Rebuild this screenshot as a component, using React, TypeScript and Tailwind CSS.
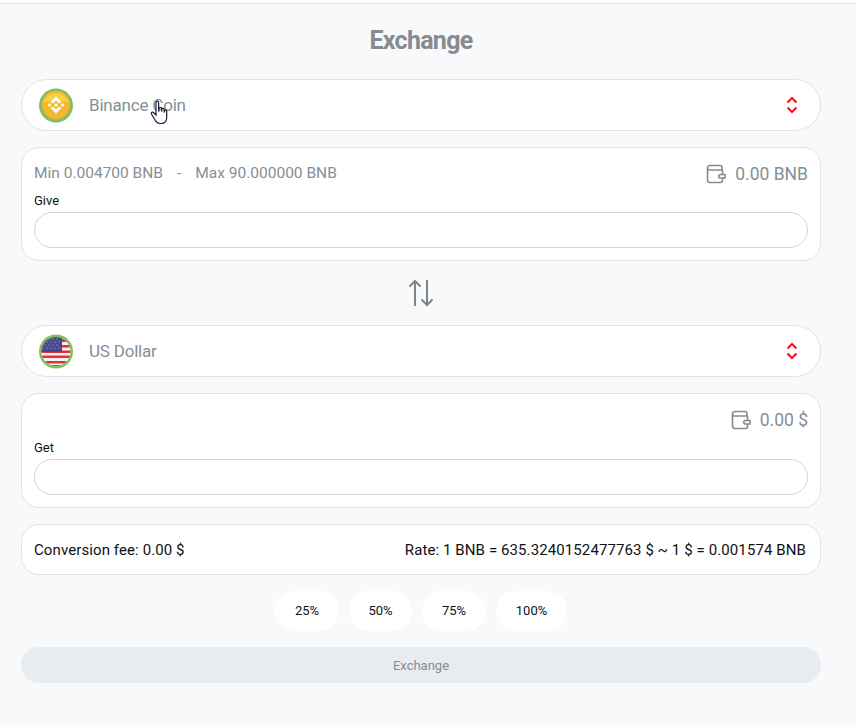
const FONT = "font-['Roboto',sans-serif]";

function BnbCoin() {
  return (
    <svg width="34" height="35" viewBox="0 0 34 35" className="shrink-0">
      <circle cx="17" cy="17.5" r="17" fill="#86bd62" />
      <circle cx="17" cy="17" r="14" fill="#f3b92d" />
      <path d="M4 15a13.5 13.5 0 0 1 26 0c-8-3-18-3-26 0z" fill="#f8cf47" />
      <path
        d="M17 8.5l5.2 5.2-2 2L17 12.5l-3.2 3.2-2-2zM8.5 17l2-2 2 2-2 2zM21.5 17l2-2 2 2-2 2zM17 14.900l2.100 2.100-2.100 2.100-2.100-2.100zM11.800 20.300l2-2 3.200 3.200 3.200-3.200 2 2-5.200 5.200z"
        fill="#fff"
      />
    </svg>
  );
}

function UsFlag() {
  return (
    <svg width="34" height="35" viewBox="0 0 34 35" className="shrink-0">
      <defs>
        <clipPath id="flag-clip">
          <circle cx="17" cy="17.500" r="14.500" />
        </clipPath>
      </defs>
      <circle cx="17" cy="17.500" r="17" fill="#7fc25a" />
      <g clipPath="url(#flag-clip)">
        <rect x="0" y="0" width="34" height="35" fill="#fbeeee" />
        <rect x="0" y="5" width="34" height="3" fill="#d9333f" />
        <rect x="0" y="11" width="34" height="2.500" fill="#d9333f" />
        <rect x="0" y="16.500" width="34" height="2.500" fill="#d9333f" />
        <rect x="0" y="21.500" width="34" height="2.500" fill="#d9333f" />
        <rect x="0" y="27" width="34" height="2.500" fill="#d9333f" />
        <rect x="0" y="31" width="34" height="4" fill="#d9333f" />
        <rect x="0" y="0" width="23" height="18" fill="#46478f" />
        <path
          d="M6 5h.01M10 5h.01M14 5h.01M18 5h.01M4 8h.01M8 8h.01M12 8h.01M16 8h.01M20 8h.01M6 11h.01M10 11h.01M14 11h.01M18 11h.01M4 14h.01M8 14h.01M12 14h.01M16 14h.01M20 14h.01"
          stroke="#b9bbdd"
          strokeWidth="1.200"
          strokeLinecap="round"
        />
      </g>
    </svg>
  );
}

function UpDown() {
  return (
    <svg width="12" height="18" viewBox="0 0 12 18" fill="none" stroke="#fb0f16" strokeWidth="2">
      <path d="M1.500 6.500L6 2l4.500 4.500" />
      <path d="M1.500 11.500L6 16l4.500-4.500" />
    </svg>
  );
}

function Wallet() {
  return (
    <svg width="20" height="20" viewBox="0 0 20 20" fill="none" stroke="#858a8e" strokeWidth="1.600">
      <path d="M16 6V3.500A2 2 0 0 0 14 1.500H4A2.500 2.500 0 0 0 1.500 4v12A2.500 2.500 0 0 0 4 18.500h10.500a2 2 0 0 0 2-2V6.500a1 1 0 0 0-.5-.5H4A2.300 2.300 0 0 1 1.500 4" />
      <path d="M19 10.500h-4.500a1.700 1.700 0 0 0 0 3.500H19z" fill="#fff" />
    </svg>
  );
}

function CoinSelect({ name, icon }: { name: string; icon: React.ReactNode }) {
  return (
    <div className="flex items-center h-[52px] bg-white border border-[#e0e3e8] rounded-[26px] pl-[17px] pr-[22px]">
      {icon}
      <span className="ml-[16px] pt-[1px] flex-1 text-[17px] text-[#868e96] tracking-[-0.2px]">{name}</span>
      <UpDown />
    </div>
  );
}

function Balance({ value }: { value: string }) {
  return (
    <div className="flex items-center gap-[9px] text-[17.5px] text-[#868e96]">
      <Wallet />
      <span>{value}</span>
    </div>
  );
}

function Field({ label }: { label: string }) {
  return (
    <div className="flex flex-col">
      <label className="text-[13px] leading-[17px] text-[#111]">{label}</label>
      <input
        type="text"
        className="mt-[3px] h-[36px] w-full bg-white border border-[#ced4da] rounded-[18px] px-3 focus:outline-none"
      />
    </div>
  );
}

function Pill({ label, width }: { label: string; width: string }) {
  return (
    <button className={`h-10 ${width} bg-white rounded-[20px] text-[13px] text-[#111]`}>
      {label}
    </button>
  );
}

export default function App() {
  return (
    <div className={`relative min-h-[727px] bg-[#f8f9fb] ${FONT}`}>
      <div className="h-1 bg-white border-b border-[#e6e8eb]" />
      <div className="pl-[21px] pr-[35px] flex flex-col">
        <h1 className="mt-[20px] h-[34px] leading-[34px] text-center text-[25px] font-bold text-[#868b90] tracking-[-0.7px]">
          Exchange
        </h1>
        <div className="mt-[21px]">
          <CoinSelect name="Binance Coin" icon={<BnbCoin />} />
        </div>

        <div className="mt-4 h-[114px] bg-white border border-[#e0e3e8] rounded-[18px] px-3 pt-[15px]">
          <div className="flex items-center justify-between h-[22px]">
            <div className="text-[15.5px] text-[#868e96]">
              <span>Min 0.004700 BNB</span>
              <span className="mx-[14px]">-</span>
              <span>Max 90.000000 BNB</span>
            </div>
            <Balance value="0.00 BNB" />
          </div>
          <div className="mt-[7px]">
            <Field label="Give" />
          </div>
        </div>

        <div className="flex justify-center h-[64px] items-center">
          <svg width="26" height="28" viewBox="0 0 26 28" fill="none" stroke="#7f8488" strokeWidth="2">
            <path d="M7 27V2M1.500 7.500L7 2l5.500 5.500" />
            <path d="M19 1v25M13.500 20.500L19 26l5.500-5.500" />
          </svg>
        </div>

        <CoinSelect name="US Dollar" icon={<UsFlag />} />

        <div className="mt-4 h-[115px] bg-white border border-[#e0e3e8] rounded-[18px] px-3 pt-[15px]">
          <div className="flex items-center justify-end h-[22px]">
            <Balance value="0.00 $" />
          </div>
          <div className="mt-[8px]">
            <Field label="Get" />
          </div>
        </div>

        <div className="mt-4 h-[51px] flex items-center justify-between bg-white border border-[#e0e3e8] rounded-[18px] pl-3 pr-[14px] pt-[1px] text-[15px] text-[#111] tracking-[0.1px]">
          <span>Conversion fee: 0.00 $</span>
          <span>Rate: 1 BNB = 635.3240152477763 $ ~ 1 $ = 0.001574 BNB</span>
        </div>

        <div className="mt-4 flex justify-center gap-[10px]">
          <Pill label="25%" width="w-16" />
          <Pill label="50%" width="w-[63px]" />
          <Pill label="75%" width="w-16" />
          <Pill label="100%" width="w-[71px]" />
        </div>

        <button className="mt-4 h-9 w-full pt-[1px] bg-[#e9ecef] rounded-[18px] text-[13px] text-[#868b90]">
          Exchange
        </button>
      </div>

      <svg
        width="18"
        height="26"
        viewBox="0 0 18 26"
        className="absolute left-[150px] top-[100px]"
        fill="#fff"
        stroke="#1d1b3a"
        strokeWidth="1.200"
      >
        <path d="M6 2.500a1.300 1.300 0 0 1 2.600 0V11h.4V8.500a1.200 1.200 0 0 1 2.400 0V11h.4V9.500a1.200 1.200 0 0 1 2.400 0V12h.3v-1a1.100 1.100 0 0 1 2.200 0v6.500c0 3.500-2 6-5.500 6H10c-2.500 0-3.800-1.300-5-3.500l-3.500-6c-.8-1.500 1-2.500 2-1.500L6 15z" />
      </svg>
    </div>
  );
}
